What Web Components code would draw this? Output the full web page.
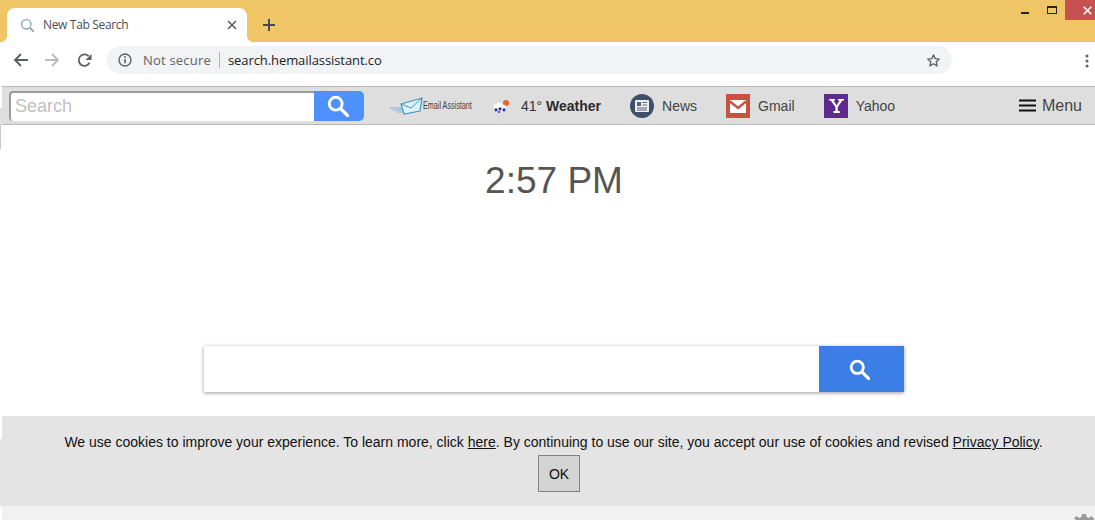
<!DOCTYPE html>
<html>
<head>
<meta charset="utf-8">
<title>New Tab Search</title>
<style>
  html, body { margin: 0; padding: 0; height: 520px; overflow: hidden; background: #fff; font-family: "Liberation Sans", Arial, sans-serif; }
</style>
</head>
<body>
<browser-tabs></browser-tabs>
<browser-toolbar></browser-toolbar>
<site-bar></site-bar>
<clock-search></clock-search>
<cookie-bar>We use cookies to improve your experience. To learn more, click <a>here</a>. By continuing to use our site, you accept our use of cookies and revised <a>Privacy Policy</a>.</cookie-bar>
<page-footer></page-footer>

<script>
const searchIcon = (size, colour) => `
  <svg width="${size}" height="${size}" viewBox="0 0 24 24" fill="none" stroke="${colour}" stroke-width="3.2">
    <circle cx="9.5" cy="9.5" r="7"/>
    <path d="M15 15l7.5 7.5" stroke-linecap="round" stroke-width="3.6"/>
  </svg>`;

class BrowserTabs extends HTMLElement {
  constructor() {
    super();
    this.shadowDOM = this.attachShadow({mode: 'open'});
    this.shadowDOM.innerHTML = `
      <style>
        :host { display: flex; height: 42px; background: #f0c566; align-items: flex-end; position: relative; }
        .tab { width: 240px; height: 34px; margin-left: 7px; background: #fff; border-radius: 8px 8px 0 0; display: flex; align-items: center; box-sizing: border-box; padding: 0 10px 0 13px; font: 12px "Open Sans", "Liberation Sans", sans-serif; color: #4a4d52; position: relative; }
        .tab::before, .tab::after { content: ""; position: absolute; bottom: 0; width: 7px; height: 7px; }
        .tab::before { left: -7px; background: radial-gradient(circle at 0 0, transparent 7px, #fff 7.5px); }
        .tab::after { right: -7px; background: radial-gradient(circle at 100% 0, transparent 7px, #fff 7.5px); }
        .title { margin-left: 8px; flex: 1; font-size: 12px; letter-spacing: -.33px; margin-top: -1px; }
        svg { display: block; }
        .plus { margin: 0 0 11px 16px; }
        .win { position: absolute; top: 0; right: 0; height: 20px; display: flex; }
        .win div { display: flex; justify-content: center; }
        .min { width: 27px; padding-top: 12px; box-sizing: border-box; }
        .max { width: 27px; padding-top: 6px; box-sizing: border-box; }
        .win .close { width: 30px; background: #c75050; justify-content: flex-end; align-items: center; padding-right: 3px; box-sizing: border-box; }
      </style>
      <div class="tab">
        <svg width="15" height="15" viewBox="0 0 15 15" fill="none">
          <circle cx="6.3" cy="6.3" r="4.7" stroke="#86a3b8" stroke-width="1.3"/>
          <path d="M9.8 9.8l4 4" stroke="#8c8c8c" stroke-width="1.4"/>
        </svg>
        <span class="title">New Tab Search</span>
        <svg width="10" height="10" viewBox="0 0 10 10"><path d="M1 1l8 8M9 1l-8 8" stroke="#55585c" stroke-width="1.5"/></svg>
      </div>
      <svg class="plus" width="12" height="12" viewBox="0 0 12 12"><path d="M6 0v12M0 6h12" stroke="#45484d" stroke-width="1.9"/></svg>
      <div class="win">
        <div class="min"><svg width="8" height="2"><rect width="8" height="2" fill="#222"/></svg></div>
        <div class="max"><svg width="10" height="8"><rect x=".5" y=".5" width="9" height="7" fill="none" stroke="#222"/><rect width="10" height="2" fill="#222"/></svg></div>
        <div class="close"><svg width="9" height="9" viewBox="0 0 9 9"><path d="M.7.7l7.6 7.6M8.3.7L.7 8.3" stroke="#fff" stroke-width="1.6"/></svg></div>
      </div>`;
  }
}
customElements.define('browser-tabs', BrowserTabs);

class BrowserToolbar extends HTMLElement {
  constructor() {
    super();
    this.shadowDOM = this.attachShadow({mode: 'open'});
    this.shadowDOM.innerHTML = `
      <style>
        :host { display: flex; height: 44px; background: #fff; box-sizing: border-box; padding: 4px 0 12px 14px; align-items: stretch; position: relative; }
        .nav { display: flex; align-items: center; gap: 17px; width: 93px; margin-left: -1px; margin-right: 1px; }
        .omni { width: 845px; background: #f1f3f4; border-radius: 14px; display: flex; align-items: center; box-sizing: border-box; padding: 0 11px; font: 13px "Open Sans", "Liberation Sans", sans-serif; }
        .secure { color: #5f6368; margin-left: 11px; font-size: 13px; letter-spacing: .2px; }
        .sep { width: 1px; height: 16px; background: #b0b3b7; margin: 0 8px; }
        .url { flex: 1; color: #202124; font-size: 13px; letter-spacing: -.08px; }
        svg { display: block; }
        .dots { position: absolute; right: 6px; top: 12px; }
      </style>
      <div class="nav">
        <svg width="15" height="14" viewBox="0 0 15 14" fill="none" stroke="#5a5d62" stroke-width="1.8"><path d="M15 7H2M8 1L2 7l6 6"/></svg>
        <svg width="15" height="14" viewBox="0 0 15 14" fill="none" stroke="#b8babd" stroke-width="1.8"><path d="M0 7h13M7 1l6 6-6 6"/></svg>
        <svg width="15" height="15" viewBox="0 0 15 15" fill="none"><path d="M12.6 9.6A5.7 5.7 0 1 1 11.6 3.2" stroke="#5a5d62" stroke-width="1.8"/><path d="M14.5 1v6h-6z" fill="#5a5d62"/></svg>
      </div>
      <div class="omni">
        <svg width="14" height="14" viewBox="0 0 14 14" fill="none"><circle cx="7" cy="7" r="6" stroke="#5f6368" stroke-width="1.4"/><path d="M7 6v4.2" stroke="#5f6368" stroke-width="1.6"/><circle cx="7" cy="4" r=".95" fill="#5f6368"/></svg>
        <span class="secure">Not secure</span><span class="sep"></span><span class="url">search.hemailassistant.co</span>
        <svg width="15" height="15" viewBox="0 0 24 24" fill="none" stroke="#5f6368" stroke-width="2.2" stroke-linejoin="round"><path d="M12 3l2.700 6 6.500.7-4.800 4.400 1.300 6.400L12 17.200l-5.700 3.300 1.300-6.400-4.800-4.400 6.500-.7z"/></svg>
      </div>
      <svg class="dots" width="4" height="14"><circle cx="2" cy="2" r="1.5" fill="#5f6368"/><circle cx="2" cy="7" r="1.5" fill="#5f6368"/><circle cx="2" cy="12" r="1.5" fill="#5f6368"/></svg>`;
  }
}
customElements.define('browser-toolbar', BrowserToolbar);

class SiteBar extends HTMLElement {
  constructor() {
    super();
    this.shadowDOM = this.attachShadow({mode: 'open'});
    this.shadowDOM.innerHTML = `
      <style>
        :host { display: flex; height: 39px; margin-left: 2px; background: #dedede; border-top: 1px solid #b9b9b9; border-bottom: 1px solid #b9b9b9; box-sizing: border-box; align-items: center; padding-left: 7px; font-size: 14px; color: #333; position: relative; }
        :host::before { content: ""; position: absolute; left: -2px; top: 21px; width: 2px; height: 17px; background: #dedede; }
        :host::after { content: ""; position: absolute; left: -2px; top: 38px; width: 1px; height: 24px; background: #c9c9c9; }
        .field { display: flex; width: 355px; height: 30px; }
        .input { width: 305px; box-sizing: border-box; background: #fff; border: 2px solid #9b9b9b; border-right: 0; border-bottom: 0; border-radius: 4px 0 0 4px; color: #c0c0c0; font-size: 18px; line-height: 26px; padding-left: 4px; }
        .go { flex: 1; background: #4d90fe; border-radius: 0 5px 5px 0; display: flex; align-items: center; justify-content: center; }
        .go svg { margin-left: -2px; }
        svg { display: block; flex: none; }
        .item { display: flex; align-items: center; }
        .logo { margin-left: 26px; width: 82px; }
        .logo span { font: 10px "Liberation Sans", sans-serif; color: #444; transform: scaleX(.72); transform-origin: left; white-space: nowrap; }
        .weather { margin-left: 20px; width: auto; }
        .weather span { margin-left: 10px; }
        .weather b { color: #2a2a2a; }
        .news { margin-left: 29px; }
        .gmail { margin-left: 29px; }
        .yahoo { margin-left: 29px; }
        .label { margin-left: 8px; color: #444; }
        .menu { margin-left: auto; margin-right: 13px; font-size: 16px; color: #444; }
        .menu svg { margin-right: 6px; }
      </style>
      <div class="field">
        <div class="input">Search</div>
        <div class="go">${searchIcon(22, '#fff')}</div>
      </div>
      <div class="item logo">
        <svg width="33" height="18" viewBox="0 0 33 18" fill="none">
          <path d="M0 11h14M3 13h12M7 15h9" stroke="#7fb6d2" stroke-width="1.2"/>
          <path d="M11 7L32 1l-2 13-16 3z" fill="#dff1f8" stroke="#3f96c0" stroke-width="1.2"/>
          <path d="M11 7l10 4L32 1" stroke="#3f96c0" stroke-width="1"/>
        </svg>
        <span>Email Assistant</span>
      </div>
      <div class="item weather">
        <svg width="19" height="14" viewBox="0 0 19 14">
          <circle cx="14" cy="4" r="3" fill="#e8622a"/>
          <path d="M1 9a3 3 0 0 1 3-4 4 4 0 0 1 7 1 2.500 2.500 0 0 1 3 3z" fill="#fff" stroke="#d8d8d8" stroke-width=".5"/>
          <circle cx="4" cy="11" r="1.4" fill="#1d2c9c"/><circle cx="8" cy="10" r="1.4" fill="#1d2c9c"/><circle cx="12" cy="11" r="1.4" fill="#1d2c9c"/><circle cx="7" cy="13" r="1" fill="#1d2c9c"/>
        </svg>
        <span>41° <b>Weather</b></span>
      </div>
      <div class="item news">
        <svg width="24" height="24" viewBox="0 0 24 24">
          <circle cx="12" cy="12" r="12" fill="#3f4f6b"/>
          <rect x="5" y="6" width="14" height="12" rx="1" fill="#eef0f2"/>
          <rect x="7" y="8" width="4" height="4" fill="#5a6478"/>
          <path d="M12.500 8.500H17M12.500 11H17M7 14H17M7 16H17" stroke="#5a6478"/>
        </svg>
        <span class="label">News</span>
      </div>
      <div class="item gmail">
        <svg width="24" height="24" viewBox="0 0 24 24">
          <rect width="24" height="24" fill="#c9523c"/>
          <rect x="4" y="6" width="16" height="13" fill="#fff"/>
          <path d="M4 7.500l8 6.500 8-6.500" fill="none" stroke="#c9523c" stroke-width="2.400"/>
        </svg>
        <span class="label">Gmail</span>
      </div>
      <div class="item yahoo">
        <svg width="24" height="24" viewBox="0 0 24 24">
          <rect width="24" height="24" fill="#5c2a8c"/>
          <path d="M5 5h6v1.600H9.600l3 4.800 3-4.800H14V5h6v1.600h-1.600L13.800 13v4h2v2H9.400v-2h2v-4L6.600 6.600H5z" fill="#fff"/>
        </svg>
        <span class="label">Yahoo</span>
      </div>
      <div class="item menu">
        <svg width="17" height="13" viewBox="0 0 17 13"><path d="M0 1.500h17M0 6.500h17M0 11.500h17" stroke="#111" stroke-width="2"/></svg>
        Menu
      </div>`;
  }
}
customElements.define('site-bar', SiteBar);

class ClockSearch extends HTMLElement {
  constructor() {
    super();
    this.shadowDOM = this.attachShadow({mode: 'open'});
    this.shadowDOM.innerHTML = `
      <style>
        :host { display: flex; flex-direction: column; align-items: center; height: 291px; box-sizing: border-box; padding-top: 34px; margin-left: 13px; }
        .time { font-size: 37px; line-height: 44px; color: #555; }
        .box { margin-top: 143px; width: 700px; height: 46px; display: flex; background: #fff; box-shadow: 0 1px 4px rgba(0,0,0,.4); margin-left: -1px; }
        .input { flex: 1; }
        .go { width: 85px; background: #3b7ee6; display: flex; align-items: center; justify-content: center; }
        .go svg { margin-left: -3px; }
      </style>
      <div class="time">2:57 PM</div>
      <div class="box">
        <div class="input"></div>
        <div class="go">${searchIcon(21, '#fff')}</div>
      </div>`;
  }
}
customElements.define('clock-search', ClockSearch);

class CookieBar extends HTMLElement {
  constructor() {
    super();
    this.shadowDOM = this.attachShadow({mode: 'open'});
    this.shadowDOM.innerHTML = `
      <style>
        :host { display: flex; flex-direction: column; align-items: center; height: 90px; margin-left: 2px; background: #e4e4e4; box-sizing: border-box; padding-top: 17px; font-size: 14px; line-height: 18px; color: #111; position: relative; }
        :host::before { content: ""; position: absolute; left: -2px; top: 23px; bottom: 0; width: 2px; background: #e4e4e4; }
        ::slotted(a) { text-decoration: underline; }
        .ok { margin-top: 4px; margin-left: 21px; width: 42px; height: 37px; box-sizing: border-box; border: 1px solid #808080; background: #d4d4d4; display: flex; align-items: center; justify-content: center; }
        .text { margin-left: 10px; }
      </style>
      <div class="text"><slot></slot></div>
      <div class="ok">OK</div>`;
  }
}
customElements.define('cookie-bar', CookieBar);

class PageFooter extends HTMLElement {
  constructor() {
    super();
    this.shadowDOM = this.attachShadow({mode: 'open'});
    this.shadowDOM.innerHTML = `
      <style>
        :host { display: flex; justify-content: flex-end; height: 14px; margin-left: 2px; background: #f1f1f1; overflow: hidden; }
        svg { margin-top: 8px; flex: none; }
      </style>
      <svg width="22" height="22" viewBox="0 0 22 22" fill="#9a9a9a">
        <path d="M9 0h4l.6 3 2.200.9L18.400 2l2.800 2.800-1.900 2.600.9 2.200 3 .6v4l-3 .6-.9 2.200 1.900 2.600-2.800 2.800-2.600-1.900-2.200.9-.6 3H9l-.6-3-2.200-.9L3.600 20 .8 17.200l1.900-2.600-.9-2.200-3-.6V8l3-.6.9-2.200L.8 4.800 3.600 2l2.600 1.900L8.400 3z"/>
      </svg>`;
  }
}
customElements.define('page-footer', PageFooter);
</script>
</body>
</html>
